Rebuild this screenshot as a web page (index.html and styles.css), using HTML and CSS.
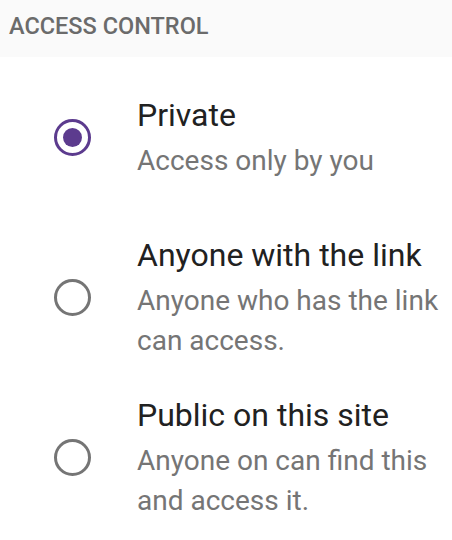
FILE: index.html
```html
<!DOCTYPE html>
<html>
<head>
<meta charset="utf-8">
<link rel="stylesheet" href="styles.css">
</head>
<body>
<div class="header">ACCESS CONTROL</div>
<div class="list">
  <div class="item">
    <div class="radio-col"><span class="radio checked"></span></div>
    <div class="text">
      <div class="title">Private</div>
      <div class="sub">Access only by you</div>
    </div>
  </div>
  <div class="item">
    <div class="radio-col"><span class="radio"></span></div>
    <div class="text">
      <div class="title">Anyone with the link</div>
      <div class="sub">Anyone who has the link<br>can access.</div>
    </div>
  </div>
  <div class="item">
    <div class="radio-col"><span class="radio"></span></div>
    <div class="text">
      <div class="title">Public on this site</div>
      <div class="sub">Anyone on can find this<br>and access it.</div>
    </div>
  </div>
</div>
</body>
</html>
```
FILE: styles.css
```css
html, body {
  margin: 0;
  padding: 0;
  background: #ffffff;
  font-family: Roboto, "Liberation Sans", sans-serif;
}
.header {
  height: 57px;
  box-sizing: border-box;
  background: #fafafa;
  color: #6b6b6b;
  font-weight: 500;
  font-size: 23.5px;
  padding-left: 9px;
  padding-bottom: 5px;
  display: flex;
  align-items: center;
}
.item {
  display: flex;
  align-items: center;
  height: 160px;
}
.radio-col {
  width: 137px;
  display: flex;
  justify-content: center;
  padding-left: 8px;
  box-sizing: border-box;
}
.radio {
  width: 37px;
  height: 37px;
  box-sizing: border-box;
  border: 3.7px solid #757575;
  border-radius: 50%;
  display: flex;
  align-items: center;
  justify-content: center;
}
.radio.checked {
  border-color: #5c3b8e;
}
.radio.checked::after {
  content: "";
  width: 19px;
  height: 19px;
  border-radius: 50%;
  background: #5c3b8e;
}
.text {
  margin-top: 2px;
}
.title {
  color: #212121;
  font-size: 32px;
  line-height: 40px;
}
.sub {
  color: #757575;
  font-size: 28px;
  line-height: 40px;
  margin-top: 6px;
}
```
